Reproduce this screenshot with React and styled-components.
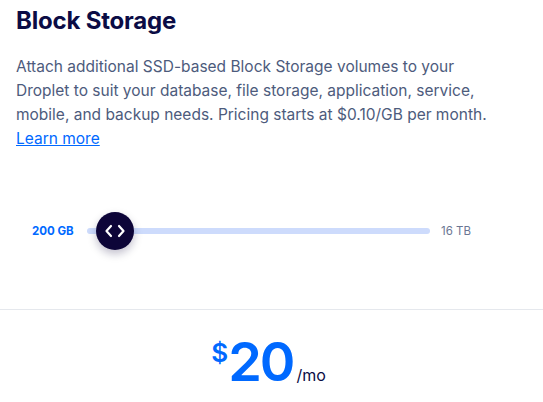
import styled, { createGlobalStyle } from 'styled-components';

const GlobalStyle = createGlobalStyle`
	body {
		margin: 0;
		background: #fff;
		font-family: Inter, 'Open Sans', sans-serif;
	}
`;

const Card = styled.div`
	width: 543px;
	height: 402px;
	overflow: hidden;
	display: flex;
	flex-direction: column;
`;

const Info = styled.section`
	padding: 3px 16px 0;
`;

const Title = styled.h2`
	margin: 0;
	font-size: 24px;
	line-height: 36px;
	font-weight: 700;
	color: #0b0c45;
	letter-spacing: -0.2px;
`;

const Text = styled.p`
	margin: 16px 0 0;
	max-width: 475px;
	font-size: 15.5px;
	line-height: 24px;
	color: #4d5b7c;
`;

const Link = styled.a`
	color: #0069ff;
	text-decoration: underline;
`;

const SliderRow = styled.div`
	display: flex;
	align-items: center;
	height: 40px;
	margin: 60px 0 0 32px;
	width: 439px;
`;

const Label = styled.span`
	font-size: 11.5px;
	font-weight: ${p => (p.active ? 700 : 400)};
	color: ${p => (p.active ? '#0069ff' : '#6b7693')};
`;

const Track = styled.div`
	position: relative;
	flex: 1;
	height: 6px;
	margin: 0 11px 0 13px;
	border-radius: 3px;
	background: #cddbfc;
`;

const Knob = styled.div`
	position: absolute;
	left: 9px;
	top: 50%;
	width: 38px;
	height: 38px;
	margin-top: -19px;
	border-radius: 50%;
	background: #0d0538;
	box-shadow: 0 4px 8px rgba(13, 5, 56, 0.25);
	display: flex;
	align-items: center;
	justify-content: center;
`;

const Price = styled.div`
	margin-top: 58px;
	border-top: 1px solid #e5e8ed;
	display: flex;
	justify-content: center;
	align-items: baseline;
	padding-top: 25px;
	padding-right: 6px;
	color: #0069ff;
`;

const Currency = styled.span`
	font-size: 26px;
	line-height: 30px;
	font-weight: 600;
	align-self: flex-start;
	margin-top: 3px;
	margin-right: 0;
`;

const Amount = styled.span`
	font-size: 54px;
	line-height: 54px;
	font-weight: 600;
	letter-spacing: -2px;
`;

const Period = styled.span`
	font-size: 16px;
	color: #0b0c45;
	margin-left: 3px;
`;

const App = () => (
	<Card>
		<GlobalStyle />
		<Info>
			<Title>Block Storage</Title>
			<Text>
				Attach additional SSD-based Block Storage volumes to your Droplet to suit your database, file storage,
				application, service, mobile, and backup needs. Pricing starts at $0.10/GB per month.
				<br />
				<Link href="#">Learn more</Link>
			</Text>
		</Info>
		<SliderRow>
			<Label active>200 GB</Label>
			<Track>
				<Knob>
					<svg width="20" height="14" viewBox="0 0 20 14" fill="none" stroke="#fff" strokeWidth="2.2" strokeLinecap="round" strokeLinejoin="round">
						<path d="M6 2 L1.5 7 L6 12" />
						<path d="M14 2 L18.5 7 L14 12" />
					</svg>
				</Knob>
			</Track>
			<Label>16 TB</Label>
		</SliderRow>
		<Price>
			<Currency>$</Currency>
			<Amount>20</Amount>
			<Period>/mo</Period>
		</Price>
	</Card>
);

export default App;
